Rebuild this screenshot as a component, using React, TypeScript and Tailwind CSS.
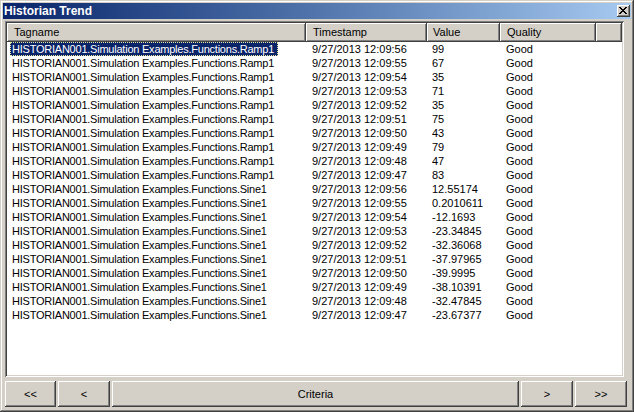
import React from "react";

const ramp = ["99", "67", "35", "71", "35", "75", "43", "79", "47", "83"];
const sine = [
  "12.55174",
  "0.2010611",
  "-12.1693",
  "-23.34845",
  "-32.36068",
  "-37.97965",
  "-39.9995",
  "-38.10391",
  "-32.47845",
  "-23.67377",
];
const secs = ["56", "55", "54", "53", "52", "51", "50", "49", "48", "47"];

const rows = [
  ...ramp.map((v, i) => ({
    tag: "HISTORIAN001.Simulation Examples.Functions.Ramp1",
    ts: `9/27/2013 12:09:${secs[i]}`,
    v,
  })),
  ...sine.map((v, i) => ({
    tag: "HISTORIAN001.Simulation Examples.Functions.Sine1",
    ts: `9/27/2013 12:09:${secs[i]}`,
    v,
  })),
];

const headerCell =
  "h-[19px] bg-[#d4d0c8] shadow-[inset_-1px_-1px_#404040,inset_1px_1px_#fff,inset_-2px_-2px_#808080] flex items-center";

const btn =
  "h-[26px] bg-[#d4d0c8] shadow-[inset_-1px_-1px_#404040,inset_1px_1px_#fff,inset_-2px_-2px_#808080] flex items-center justify-center text-[11px] text-black";

export default function App() {
  return (
    <div className="w-[634px] h-[412px] bg-[#d4d0c8] p-[3px] flex flex-col font-['Liberation_Sans',Arial,sans-serif] text-black shadow-[inset_-1px_-1px_#404040,inset_1px_1px_#d4d0c8,inset_-2px_-2px_#808080,inset_2px_2px_#fff]">
      {/* Title bar */}
      <div className="h-[16px] bg-gradient-to-r from-[#0a246a] to-[#a6caf0] flex items-center justify-between pl-[1px] pr-[1px]">
        <span className="text-white font-bold text-[12px] leading-none">Historian Trend</span>
        <div className="w-[13px] h-[12px] bg-[#d4d0c8] shadow-[inset_-1px_-1px_#404040,inset_1px_1px_#fff,inset_-2px_-2px_#808080] flex items-center justify-center pr-[1px] pb-[1px]">
          <svg width="8" height="7" viewBox="0 0 8 7">
            <path d="M0 0h2v1h1v1h2V1h1V0h2v1H7v1H6v1H5v1h1v1h1v1h1v1H6V6H5V5H3v1H2v1H0V6h1V5h1V4h1V3H2V2H1V1H0z" fill="#000" />
          </svg>
        </div>
      </div>

      <div className="flex-1 flex flex-col pl-[2px] pr-[4px] pt-[2px] pb-[2px]">
        {/* List view */}
        <div className="h-[356px] mr-[3px] bg-white p-[2px] shadow-[inset_1px_1px_#808080,inset_-1px_-1px_#fff,inset_2px_2px_#404040,inset_-2px_-2px_#d4d0c8] flex flex-col overflow-hidden">
          <div className="flex text-[11px]">
            <div className={`${headerCell} w-[299px] pl-[7px]`}>Tagname</div>
            <div className={`${headerCell} w-[121px] pl-[7px]`}>Timestamp</div>
            <div className={`${headerCell} w-[73px] pl-[6px]`}>Value</div>
            <div className={`${headerCell} w-[96px] pl-[7px]`}>Quality</div>
            <div className={`${headerCell} w-[26px]`}></div>
          </div>
          <div className="flex flex-col">
            {rows.map((r, i) => (
              <div key={i} className="flex h-[14px] text-[11px] leading-[14px]">
                <div className="w-[299px] pl-[3px] tracking-[-0.23px]">
                  {i === 0 ? (
                    <span className="inline-block h-[14px] bg-[#0a246a] text-white pl-[1px] pr-[3px] border border-dotted border-[#e8e8a0] leading-[12px]">
                      {r.tag}
                    </span>
                  ) : (
                    <span className="inline-block px-[2px]">{r.tag}</span>
                  )}
                </div>
                <div className="w-[121px] pl-[6px]">{r.ts}</div>
                <div className="w-[73px] pl-[5px]">{r.v}</div>
                <div className="w-[96px] pl-[6px]">Good</div>
              </div>
            ))}
          </div>
        </div>

        {/* Buttons */}
        <div className="mt-[4px] flex gap-[2px]">
          <div className={`${btn} w-[51px]`}>&lt;&lt;</div>
          <div className={`${btn} w-[52px]`}>&lt;</div>
          <div className={`${btn} w-[407px]`}>Criteria</div>
          <div className={`${btn} w-[52px]`}>&gt;</div>
          <div className={`${btn} w-[52px]`}>&gt;&gt;</div>
        </div>
      </div>
    </div>
  );
}
